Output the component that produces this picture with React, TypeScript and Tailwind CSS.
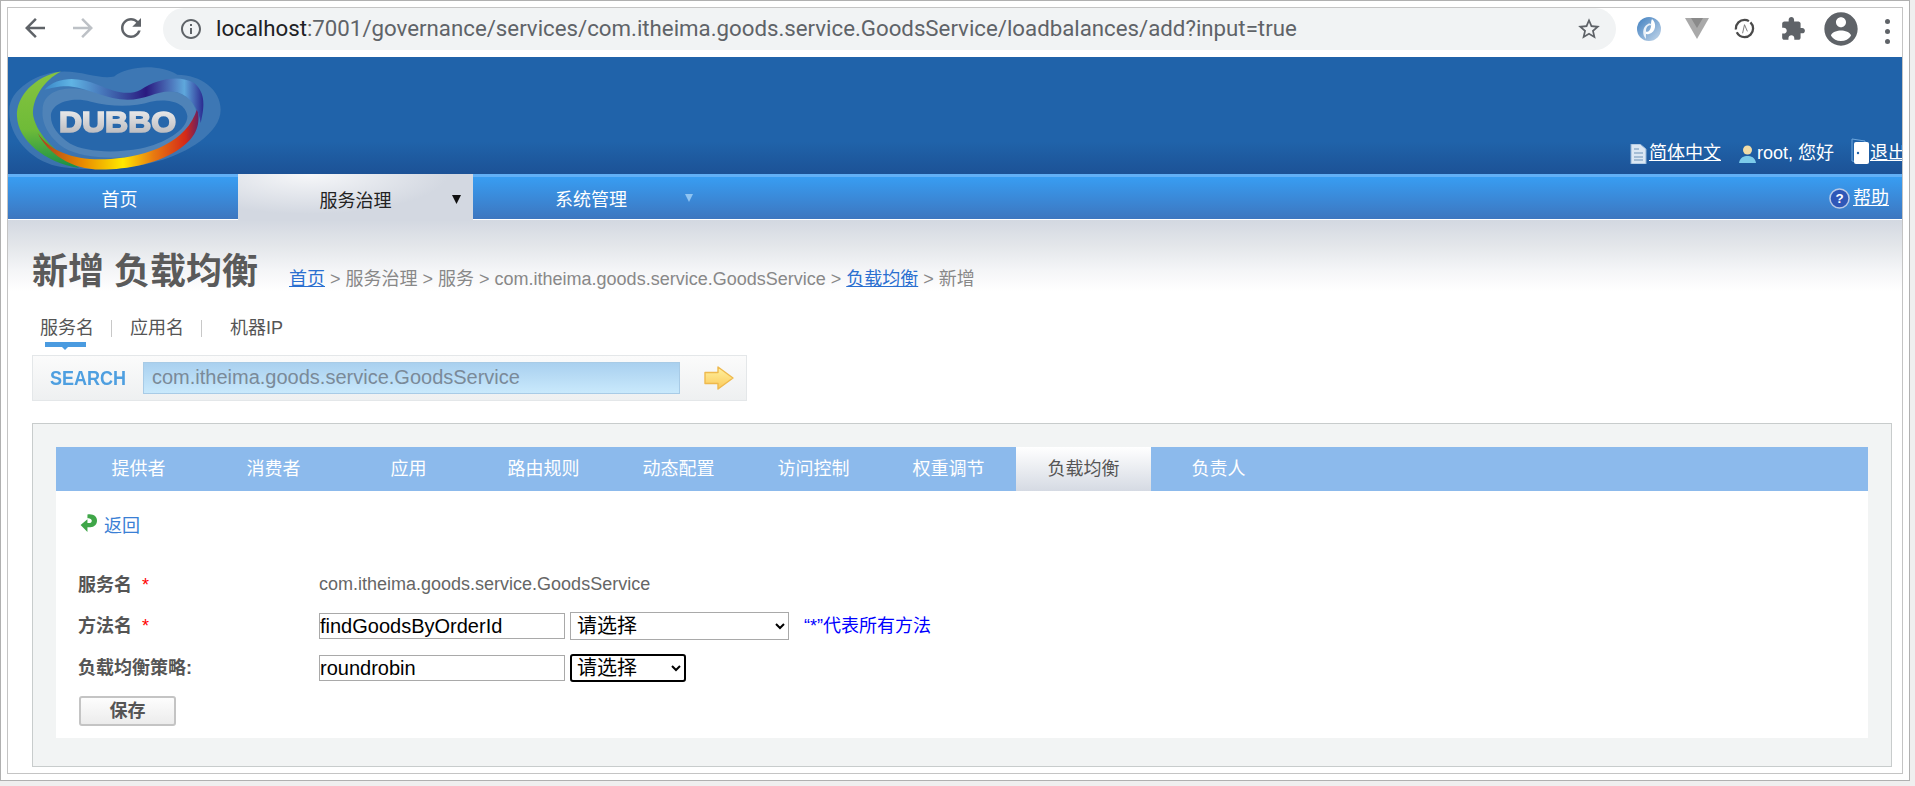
import React from "react";

const font = { fontFamily: '"Liberation Sans","Noto Sans CJK SC",sans-serif' };

function M({ d, className }: { d: string; className: string }) {
  return (
    <svg viewBox="0 0 24 24" className={className} fill="currentColor">
      <path d={d} />
    </svg>
  );
}

function Logo() {
  return (
    <svg viewBox="21 21 640 336" className="w-[213px] h-[112px] shrink-0 blur-[0.4px]">
      <defs>
        <linearGradient id="g1" x1="0" y1="0" x2="0" y2="1">
          <stop offset="0" stopColor="#86c440" />
          <stop offset="0.6" stopColor="#6fbb38" />
          <stop offset="1" stopColor="#179048" />
        </linearGradient>
        <linearGradient id="g2" x1="0" y1="0" x2="1" y2="0">
          <stop offset="0" stopColor="#a83a20" />
          <stop offset="0.28" stopColor="#e88a00" />
          <stop offset="0.53" stopColor="#ffe800" />
          <stop offset="0.72" stopColor="#e87a10" />
          <stop offset="0.92" stopColor="#d42a18" />
          <stop offset="1" stopColor="#6a1f60" />
        </linearGradient>
        <linearGradient id="g3" x1="0" y1="0" x2="1" y2="0">
          <stop offset="0" stopColor="#3a88c8" />
          <stop offset="0.17" stopColor="#60b4e4" />
          <stop offset="0.45" stopColor="#3c5ca8" />
          <stop offset="0.64" stopColor="#2a1a80" />
          <stop offset="0.88" stopColor="#5fa8dc" />
          <stop offset="1" stopColor="#2a2a90" />
        </linearGradient>
        <linearGradient id="g4" x1="0" y1="0" x2="0" y2="1">
          <stop offset="0" stopColor="#f4f4f4" />
          <stop offset="1" stopColor="#b4b4b8" />
        </linearGradient>
      </defs>
      <path d="M25,170 C25,110 110,55 190,55 C250,55 300,80 340,70 C380,40 470,30 530,65 C600,65 660,110 660,170 C660,240 560,300 470,325 C390,350 250,355 170,340 C80,320 20,240 25,170Z" fill="#5a8bbd" opacity="0.5" />
      <path d="M125,170 C125,115 190,95 260,112 C320,130 370,140 420,128 C480,105 565,105 585,170 C595,220 520,275 440,300 C360,325 240,315 190,285 C150,258 120,215 125,170Z" fill="#4f83b8" />
      <path d="M150,190 C150,150 210,130 270,146 C330,162 400,162 450,146 C500,136 555,146 560,190 C560,232 490,272 420,287 C340,302 250,297 207,272 C172,247 150,222 150,190Z" fill="#2767ab" />
      <path d="M180,55 C100,70 45,130 48,190 C50,260 130,330 235,345 C170,300 110,250 97,190 C90,140 130,80 180,55Z" fill="url(#g1)" />
      <path d="M110,240 C150,300 230,325 330,318 C440,310 560,270 590,165 C600,210 590,250 540,285 C480,330 380,350 300,350 C210,350 140,300 110,240Z" fill="url(#g2)" />
      <path d="M130,110 C170,70 230,70 290,95 C340,115 380,130 420,110 C470,75 540,65 580,90 C610,115 615,150 600,210 C595,170 570,130 530,118 C480,105 440,140 380,140 C320,140 260,105 210,100 C180,97 150,105 130,110Z" fill="url(#g3)" />
      <text x="174" y="236" fontFamily="Liberation Sans" fontWeight="700" fontSize="88" textLength="352" lengthAdjust="spacingAndGlyphs" fill="url(#g4)" stroke="url(#g4)" strokeWidth="5">DUBBO</text>
    </svg>
  );
}

function Toolbar() {
  return (
    <div className="h-[49px] bg-white flex items-start pl-[12px] shrink-0">
      <M className="w-[30px] h-[30px] mt-[5px] text-[#5f6368]" d="M20 11H7.83l5.59-5.59L12 4l-8 8 8 8 1.41-1.41L7.83 13H20v-2z" />
      <M className="w-[30px] h-[30px] mt-[5px] ml-[18px] text-[#bdc1c6]" d="M12 4l-1.41 1.41L16.17 11H4v2h12.17l-5.58 5.59L12 20l8-8z" />
      <M className="w-[30px] h-[30px] mt-[5px] ml-[18px] text-[#5f6368]" d="M17.65 6.35C16.2 4.9 14.21 4 12 4c-4.42 0-7.99 3.58-7.99 8s3.57 8 7.99 8c3.73 0 6.84-2.55 7.73-6h-2.08c-.82 2.33-3.04 4-5.65 4-3.31 0-6-2.69-6-6s2.69-6 6-6c1.66 0 3.14.69 4.22 1.78L13 11h7V4l-2.35 2.35z" />
      <div className="ml-[17px] w-[1453px] h-[42px] rounded-full bg-[#f1f3f4] flex items-center pl-[16px] pr-[14px]">
        <M className="w-[24px] h-[24px] text-[#5f6368] shrink-0" d="M11 7h2v2h-2zm0 4h2v6h-2zm1-9C6.48 2 2 6.48 2 12s4.48 10 10 10 10-4.48 10-10S17.52 2 12 2zm0 18c-4.41 0-8-3.59-8-8s3.59-8 8-8 8 3.59 8 8-3.59 8-8 8z" />
        <div className="ml-[13px] flex-1 text-[22.25px] text-[#5f6368] whitespace-nowrap" style={{ fontFamily: "Roboto, sans-serif" }}>
          <span className="text-[#202124]">localhost</span>:7001/governance/services/com.itheima.goods.service.GoodsService/loadbalances/add?input=true
        </div>
        <M className="w-[26px] h-[26px] text-[#5f6368] shrink-0" d="M22 9.24l-7.19-.62L12 2 9.19 8.63 2 9.24l5.46 4.73L5.82 21 12 17.27 18.18 21l-1.63-7.03L22 9.24zM12 15.4l-3.76 2.27 1-4.28-3.32-2.88 4.38-.38L12 6.1l1.71 4.04 4.38.38-3.32 2.88 1 4.28L12 15.4z" />
      </div>
      <svg viewBox="0 0 24 24" className="w-[24px] h-[24px] ml-[21px] mt-[9px]">
        <defs>
          <linearGradient id="e1" x1="0" y1="0" x2="1" y2="1">
            <stop offset="0" stopColor="#3f7fc0" />
            <stop offset="1" stopColor="#c6d8ea" />
          </linearGradient>
        </defs>
        <circle cx="12" cy="12" r="12" fill="url(#e1)" />
        <path d="M15 2 C20 6 19 15 12 17 C9 18 7 16 8 13 C9 17 14 14 14 9 C14 6 14 4 15 2Z" fill="#fff" />
        <path d="M9 22 C5 18 5 10 11 7 C13 6 15 7 15 9 C13 7 9 9 9 14 C9 17 9 19 9 22Z" fill="#e8f0f8" />
      </svg>
      <svg viewBox="0 0 24 21" className="w-[24px] h-[21px] ml-[24px] mt-[10px]">
        <path d="M0 0H24L12 21Z" fill="#a9a9a9" />
        <path d="M6 0H18L12 10Z" fill="#8a8a8a" />
      </svg>
      <svg viewBox="0 0 22 22" className="w-[21px] h-[21px] ml-[25px] mt-[10px]">
        <circle cx="11" cy="11" r="9" fill="#fff" stroke="#4a4a4a" strokeWidth="2.4" strokeDasharray="24 3 20 2" />
        <path d="M9 16 L11 7 L14 14" fill="none" stroke="#777" strokeWidth="1" />
      </svg>
      <M className="w-[26px] h-[26px] ml-[25px] mt-[8px] text-[#5f6368]" d="M20.5 11H19V7c0-1.1-.9-2-2-2h-4V3.5C13 2.12 11.88 1 10.5 1S8 2.12 8 3.5V5H4c-1.1 0-1.99.9-1.99 2v3.8H3.5c1.49 0 2.7 1.21 2.7 2.7s-1.21 2.7-2.7 2.7H2V20c0 1.1.9 2 2 2h3.8v-1.5c0-1.49 1.21-2.7 2.7-2.7 1.49 0 2.7 1.21 2.7 2.7V22H17c1.1 0 2-.9 2-2v-4h1.5c1.38 0 2.5-1.12 2.5-2.5S21.88 11 20.5 11z" />
      <M className="w-[40px] h-[40px] ml-[15px] mt-[1px] text-[#5f6368] shrink-0" d="M12 2C6.48 2 2 6.48 2 12s4.48 10 10 10 10-4.48 10-10S17.52 2 12 2zm0 3c1.66 0 3 1.34 3 3s-1.34 3-3 3-3-1.34-3-3 1.34-3 3-3zm0 14.2c-2.5 0-4.71-1.28-6-3.22.03-1.99 4-3.08 6-3.08 1.99 0 5.97 1.09 6 3.08-1.29 1.94-3.5 3.22-6 3.22z" />
      <div className="ml-[24px] mt-[11px] flex flex-col gap-[5px] shrink-0">
        <span className="block w-[5px] h-[5px] rounded-full bg-[#5f6368]" />
        <span className="block w-[5px] h-[5px] rounded-full bg-[#5f6368]" />
        <span className="block w-[5px] h-[5px] rounded-full bg-[#5f6368]" />
      </div>
    </div>
  );
}

function Header() {
  return (
    <div className="h-[117px] shrink-0 bg-[linear-gradient(to_bottom,#2063aa_0%,#2063aa_72%,#1c5296_100%)] flex overflow-hidden">
      <div className="pt-[3px]">
        <Logo />
      </div>
      <div className="flex-1 flex justify-end items-start pt-[82px] text-[18px] leading-[28px] text-white whitespace-nowrap">
        <svg viewBox="0 0 17 20" className="w-[17px] h-[20px] mt-[5px] mr-[2px]">
          <path d="M1 0H10L16 5V20H1Z" fill="#dbe7f3" stroke="#8fb2d6" />
          <path d="M4 5H9M4 9H13M4 13H13M4 16H13" stroke="#6f93b8" strokeWidth="1.2" />
        </svg>
        <span className="underline">简体中文</span>
        <svg viewBox="0 0 17 20" className="w-[17px] h-[20px] mt-[4px] ml-[18px] mr-[1px]">
          <path d="M0 20 C1 14 5 13 8.5 13 C12 13 16 14 17 20Z" fill="#7ccbea" />
          <circle cx="8.5" cy="7" r="4.5" fill="#f1dca6" />
        </svg>
        <span>root, 您好</span>
        <svg viewBox="0 0 18 26" className="w-[18px] h-[26px] ml-[17px] mr-[1px] -mt-[1px]">
          <path d="M1 1 L14 3 V25 L1 23Z" fill="#2063aa" stroke="#6ea7dc" />
          <rect x="3" y="4" width="15" height="22" rx="2" fill="#fff" />
          <circle cx="7" cy="15" r="1.2" fill="#2063aa" />
        </svg>
        <span className="underline w-[32px] overflow-hidden">退出</span>
      </div>
    </div>
  );
}

function Nav() {
  return (
    <div className="relative h-[46px] shrink-0 border-t-[3px] border-t-[#62b0f6] border-b border-b-white bg-[linear-gradient(to_bottom,#389df2,#3d76bf)] flex text-[18px] text-white">
      <div className="w-[230px] flex items-center justify-center pr-[7px] pt-[5px]">首页</div>
      <div className="relative w-[235px] h-[47px] -mt-[3px] pt-[8px] bg-[radial-gradient(ellipse_at_30%_0%,#f6f7f9_0%,#d3d8e1_60%)] text-[#222] flex items-center justify-center">
        服务治理
        <svg viewBox="0 0 8 8" className="absolute left-[214px] top-[21px] w-[9px] h-[9px]">
          <path d="M0 0H8L4 8Z" fill="#111" />
        </svg>
      </div>
      <div className="relative w-[236px] flex items-center justify-center pt-[5px]">
        系统管理
        <svg viewBox="0 0 8 8" className="absolute left-[212px] top-[17px] w-[8px] h-[8px]">
          <path d="M0 0H8L4 8Z" fill="#8fc4f2" />
        </svg>
      </div>
      <div className="flex-1 flex justify-end items-center pr-[13px] pt-[1px]">
        <svg viewBox="0 0 22 22" className="w-[21px] h-[21px] mr-[3px]">
          <circle cx="11" cy="11" r="10" fill="#2f57b8" stroke="#b9c9e6" strokeWidth="1.6" />
          <text x="11" y="16" textAnchor="middle" fontFamily="Liberation Sans" fontWeight="700" fontSize="14" fill="#fff">?</text>
        </svg>
        <span className="underline">帮助</span>
      </div>
    </div>
  );
}

const tabs = ["提供者", "消费者", "应用", "路由规则", "动态配置", "访问控制", "权重调节", "负载均衡", "负责人"];

function Panel() {
  const select = "h-[28px] border border-[#a9a9a9] bg-white text-[20px] text-black pl-[2px]";
  const input = "w-[246px] h-[26px] border border-[#a9a9a9] bg-white text-[20px] text-black px-0 outline-none";
  return (
    <div className="ml-[24px] mt-[22px] w-[1860px] h-[344px] border border-[#c8cccc] bg-[#f2f4f4] px-[23px] pt-[23px]">
      <div className="h-[44px] bg-[#8cbaec] flex pl-[15px] text-[18px] text-white">
        {tabs.map((t) => (
          <div
            key={t}
            className={
              t === "负载均衡"
                ? "w-[135px] flex items-center justify-center text-[#555] bg-[linear-gradient(to_bottom,#ffffff,#d5dae3)]"
                : "w-[135px] flex items-center justify-center"
            }
          >
            {t}
          </div>
        ))}
      </div>
      <div className="h-[247px] bg-white pl-[22px] pt-[25px] text-[18px]">
        <div className="h-[20px] flex items-center text-[#3a7fd5]">
          <svg viewBox="0 0 16 18" className="w-[17px] h-[19px] ml-[2px] mr-[7px] -mt-[5px]">
            <path d="M7 0.5 C13 -0.5 16.5 3 16 7 C15.5 11.5 11 13 7 12.5 V17 L0.5 10.5 L7 5 V8.5 C10 9 11.5 8 11 6 C10.5 4.5 9 4 7 4Z" fill="#3fa648" />
          </svg>
          <span>返回</span>
        </div>
        <div className="mt-[36px] h-[26px] flex items-center">
          <div className="w-[241px] font-bold text-[#555] pt-[1px]">
            服务名 <span className="ml-[5px] text-[#f00] font-normal">*</span>
          </div>
          <div className="text-[#666] -mt-[2px]">com.itheima.goods.service.GoodsService</div>
        </div>
        <div className="mt-[15px] h-[26px] flex items-center">
          <div className="w-[241px] font-bold text-[#555]">
            方法名 <span className="ml-[5px] text-[#f00] font-normal">*</span>
          </div>
          <input className={input} defaultValue="findGoodsByOrderId" style={font} />
          <select className={select + " ml-[5px] w-[219px]"} style={font}>
            <option>请选择</option>
          </select>
          <div className="ml-[15px] text-[#00f]">“*”代表所有方法</div>
        </div>
        <div className="mt-[16px] h-[26px] flex items-center">
          <div className="w-[241px] font-bold text-[#555]">负载均衡策略:</div>
          <input className={input} defaultValue="roundrobin" style={font} />
          <select className="ml-[5px] w-[116px] h-[28px] border-2 border-black rounded-[3px] bg-white text-[20px] text-black pl-[1px]" style={font}>
            <option>请选择</option>
          </select>
        </div>
        <button className="block mt-[15px] ml-[1px] w-[97px] h-[30px] rounded-[3px] border-2 border-[#c4c4c4] bg-[linear-gradient(to_bottom,#fdfdfd,#ececec)] text-[18px] font-bold text-[#555]">
          保存
        </button>
      </div>
    </div>
  );
}

function Main() {
  return (
    <div className="flex-1 bg-[linear-gradient(to_bottom,#d3d8e1_0px,#e3e6ea_25px,#f4f5f7_50px,#ffffff_72px)]">
      <div className="pl-[24px] pt-[31px] h-[68px] flex items-baseline whitespace-nowrap">
        <span className="text-[36px] leading-[42px] font-bold text-[#5a5a5a]">新增 负载均衡</span>
        <span className="ml-[31px] relative top-[1px] text-[18px] text-[#888]">
          <span className="underline text-[#2a6fd0]">首页</span> &gt; 服务治理 &gt; 服务 &gt; com.itheima.goods.service.GoodsService &gt;{" "}
          <span className="underline text-[#2a6fd0]">负载均衡</span> &gt; 新增
        </span>
      </div>
      <div className="mt-[30px] h-[20px] pl-[32px] flex items-center text-[18px] text-[#555]">
        <span>服务名</span>
        <span className="ml-[17px] w-px h-[17px] bg-[#c8c8c8]" />
        <span className="ml-[18px]">应用名</span>
        <span className="ml-[17px] w-px h-[17px] bg-[#c8c8c8]" />
        <span className="ml-[28px]">机器IP</span>
      </div>
      <div className="relative mt-[4px] ml-[37px] w-[41px] h-[5px] bg-[#4a9be0]">
        <svg viewBox="0 0 6 3" className="absolute left-[17px] top-[5px] w-[6px] h-[3px]">
          <path d="M0 0H6L3 3Z" fill="#4a9be0" />
        </svg>
      </div>
      <div className="mt-[8px] ml-[24px] w-[715px] h-[46px] border border-[#e4e7e9] bg-[linear-gradient(to_bottom,#fbfbfb,#eef0f1)] flex items-center">
        <span className="ml-[17px] w-[93px] font-bold text-[20px] text-[#4e9fe0] origin-left scale-x-[0.9]">SEARCH</span>
        <div className="w-[537px] h-[32px] border border-[#a8cbe6] bg-[linear-gradient(to_bottom,#a9d0ef,#c9e9fc)] text-[20px] leading-[28px] text-[#7a8a99] pl-[8px]">
          com.itheima.goods.service.GoodsService
        </div>
        <svg viewBox="0 0 30 24" className="ml-[24px] w-[30px] h-[24px]">
          <defs>
            <linearGradient id="ar" x1="0" y1="0" x2="0" y2="1">
              <stop offset="0" stopColor="#fff2a0" />
              <stop offset="1" stopColor="#fbc95a" />
            </linearGradient>
          </defs>
          <path d="M1 6.5H14V1L29 12L14 23V17.5H1Z" fill="url(#ar)" stroke="#eeb94d" strokeWidth="1.4" strokeLinejoin="round" />
        </svg>
      </div>
      <Panel />
    </div>
  );
}

export default function App() {
  return (
    <div className="w-[1915px] h-[786px] bg-[#efefef] overflow-hidden" style={font}>
      <div className="w-[1910px] h-[781px] border border-[#b0b0b0] bg-white p-[6px]">
        <div className="w-[1896px] h-[767px] border border-[#c4c4c4] flex flex-col overflow-hidden">
          <Toolbar />
          <Header />
          <Nav />
          <Main />
        </div>
      </div>
    </div>
  );
}
